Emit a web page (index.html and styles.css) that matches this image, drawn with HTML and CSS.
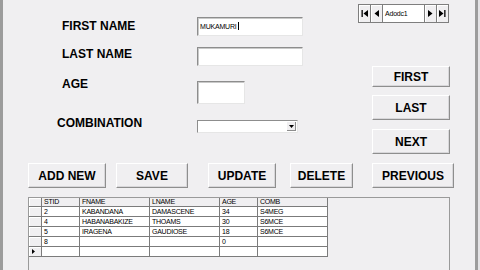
FILE: index.html
```html
<!DOCTYPE html>
<html>
<head>
	<meta charset="utf-8" />
	<title>Student Form</title>
	<link rel="stylesheet" href="styles.css">
</head>
<body>
	<div class="window">
		<div class="edge"></div>
		<div class="form">
			<div class="top">
				<div class="labels">
					<div class="lbl">FIRST NAME</div>
					<div class="lbl lbl-last">LAST NAME</div>
					<div class="lbl lbl-age">AGE</div>
					<div class="lbl lbl-comb">COMBINATION</div>
				</div>
				<div class="fields">
					<div class="txt txt-name">MUKAMURI<span class="caret"></span></div>
					<div class="txt txt-name txt-last"></div>
					<div class="txt txt-age"></div>
					<div class="combo">
						<span class="combo-btn">
							<svg width="5" height="3" viewBox="0 0 5 3"><polygon points="0,0 5,0 2.5,3" fill="#000"/></svg>
						</span>
					</div>
				</div>
				<div class="side">
					<div class="nav">
						<span class="nav-btn"><svg width="7" height="7" viewBox="0 0 7 7"><rect x="0.5" y="0" width="1.3" height="7" fill="#000"/><polygon points="7,0 7,7 2.5,3.5" fill="#000"/></svg></span>
						<span class="nav-btn"><svg width="5" height="7" viewBox="0 0 5 7"><polygon points="5,0 5,7 0.5,3.5" fill="#000"/></svg></span>
						<span class="nav-caption">Adodc1</span>
						<span class="nav-btn nav-btn-r"><svg width="5" height="7" viewBox="0 0 5 7"><polygon points="0,0 0,7 4.5,3.5" fill="#000"/></svg></span>
						<span class="nav-btn"><svg width="7" height="7" viewBox="0 0 7 7"><polygon points="0,0 0,7 4.5,3.5" fill="#000"/><rect x="5.2" y="0" width="1.3" height="7" fill="#000"/></svg></span>
					</div>
					<div class="btn btn-side btn-first">FIRST</div>
					<div class="btn btn-side btn-last">LAST</div>
					<div class="btn btn-side btn-next">NEXT</div>
				</div>
			</div>

			<div class="actions">
				<div class="btn btn-add">ADD NEW</div>
				<div class="btn btn-save">SAVE</div>
				<div class="btn btn-update">UPDATE</div>
				<div class="btn btn-delete">DELETE</div>
				<div class="btn btn-prev">PREVIOUS</div>
			</div>

			<div class="grid">
				<table>
					<tr class="head">
						<td class="rowsel"></td><td class="c-id">STID</td><td class="c-wide">FNAME</td><td class="c-wide">LNAME</td><td class="c-id">AGE</td><td class="c-wide">COMB</td>
					</tr>
					<tr>
						<td class="rowsel"></td><td>2</td><td>KABANDANA</td><td>DAMASCENE</td><td>34</td><td>S4MEG</td>
					</tr>
					<tr>
						<td class="rowsel"></td><td>4</td><td>HABANABAKIZE</td><td>THOAMS</td><td>30</td><td>S6MCE</td>
					</tr>
					<tr>
						<td class="rowsel"></td><td>5</td><td>IRAGENA</td><td>GAUDIOSE</td><td>18</td><td>S6MCE</td>
					</tr>
					<tr>
						<td class="rowsel"></td><td>8</td><td></td><td></td><td>0</td><td></td>
					</tr>
					<tr>
						<td class="rowsel"><svg width="3" height="5" viewBox="0 0 3 5"><polygon points="0,0 3,2.5 0,5" fill="#000"/></svg></td><td></td><td></td><td></td><td></td><td></td>
					</tr>
				</table>
			</div>
		</div>
		<div class="edge edge-right"></div>
		<div class="edge-out"></div>
	</div>
</body>
</html>
```
FILE: styles.css
```css
body { margin: 0; padding: 0; background-color: #f0eff1; font: normal 12px "Liberation Sans", Arial, sans-serif; color: #000; overflow: hidden; }

.window { display: flex; width: 480px; height: 270px; }
.edge { width: 3px; background-color: #9c9c9c; }
.edge-right { width: 3px; }
.edge-out { width: 2px; background-color: #e4e3e6; }
.form { width: 472px; }

/* upper part: labels, text boxes, navigator */
.top { display: flex; height: 163px; }

.labels { display: flex; flex-direction: column; align-items: flex-start; width: 135px; margin-left: 59px; padding-top: 19px; }
.lbl { font-weight: bold; line-height: 14px; white-space: nowrap; }
.lbl-last { margin-top: 14px; }
.lbl-age { margin-top: 16px; }
.lbl-comb { margin-top: 25px; margin-left: -5px; }

.fields { display: flex; flex-direction: column; width: 106px; padding-top: 17px; }
.txt {
	box-sizing: border-box;
	background-color: #fff;
	border-top: 1px solid #8d8d8d;
	border-left: 1px solid #8d8d8d;
	border-right: 1px solid #e6e6e6;
	border-bottom: 1px solid #e6e6e6;
	box-shadow: inset 1px 1px 0 #c9c9c9;
	font-size: 7px;
	letter-spacing: -0.2px;
	padding: 4px 0 0 2px;
	line-height: 9px;
}
.txt-name { width: 106px; height: 19px; }
.txt-last { margin-top: 11px; }
.txt-age { width: 48px; height: 23px; margin-top: 15px; }
.caret { display: inline-block; width: 1px; height: 8px; background-color: #000; vertical-align: -1px; margin-left: 1px; }

.combo {
	box-sizing: border-box;
	display: flex;
	justify-content: flex-end;
	align-items: center;
	width: 101px;
	height: 13px;
	margin-top: 16px;
	background-color: #fff;
	border-top: 1px solid #8d8d8d;
	border-left: 1px solid #8d8d8d;
	border-right: 1px solid #e6e6e6;
	border-bottom: 1px solid #e6e6e6;
	padding-right: 1px;
}
.combo-btn { display: flex; align-items: center; justify-content: center; width: 9px; height: 9px; background-color: #f0eff1; border-right: 1px solid #8d8d8d; border-bottom: 1px solid #8d8d8d; box-sizing: border-box; }

.side { display: flex; flex-direction: column; align-items: flex-start; margin-left: 55px; padding-top: 4px; }

.nav { display: flex; height: 19px; width: 91px; box-sizing: border-box; border: 1px solid #7e7e7e; background-color: #fff; }
.nav-btn { display: flex; align-items: center; justify-content: center; width: 11px; background-color: #f0eff1; border-right: 1px solid #7e7e7e; box-shadow: inset 1px 1px 0 #fff; }
.nav-btn-r { border-left: 1px solid #7e7e7e; }
.nav-btn:last-child { border-right: none; }
.nav-caption { flex: 1; font-size: 7px; line-height: 17px; padding-left: 2px; letter-spacing: -0.2px; }

/* command buttons */
.btn {
	box-sizing: border-box;
	display: flex;
	align-items: center;
	justify-content: center;
	height: 25px;
	font-weight: bold;
	background-color: #f0eff1;
	border-top: 1px solid #fff;
	border-left: 1px solid #fff;
	border-right: 1px solid #8e8e8e;
	border-bottom: 1px solid #8e8e8e;
	box-shadow: inset -1px -1px 0 #d8d7da;
	white-space: nowrap;
}
.btn-side { width: 78px; margin-left: 14px; }
.btn-first { height: 21px; margin-top: 43px; }
.btn-last { margin-top: 8px; }
.btn-next { margin-top: 9px; }

.actions { display: flex; height: 25px; }
.btn-add { width: 78px; margin-left: 25px; }
.btn-save { width: 72px; margin-left: 10px; }
.btn-update { width: 68px; margin-left: 20px; }
.btn-delete { width: 63px; margin-left: 14px; }
.btn-prev { width: 82px; margin-left: 19px; }

/* data grid */
.grid { box-sizing: border-box; width: 422px; height: 80px; margin: 9px 0 0 25px; border-top: 1px solid #9a9a9a; border-left: 1px solid #9a9a9a; border-right: 1px solid #9a9a9a; }
.grid table { border-collapse: collapse; font-size: 7px; color: #000; letter-spacing: -0.25px; }
.grid td { border: 1px solid #7b7b7b; height: 9px; padding: 0 0 0 2px; line-height: 8px; background-color: #fff; white-space: nowrap; vertical-align: middle; }
.grid tr:first-child td { border-top: none; height: 8px; }
.grid td:first-child { border-left: none; }
.grid .head td { background-color: #f0eff1; }
.grid td.rowsel { width: 9px; background-color: #f0eff1; box-shadow: inset 1px 1px 0 #fff; padding: 0 0 0 3px; }
.grid td.c-id { width: 35px; }
.grid td.c-wide { width: 67px; }
```
